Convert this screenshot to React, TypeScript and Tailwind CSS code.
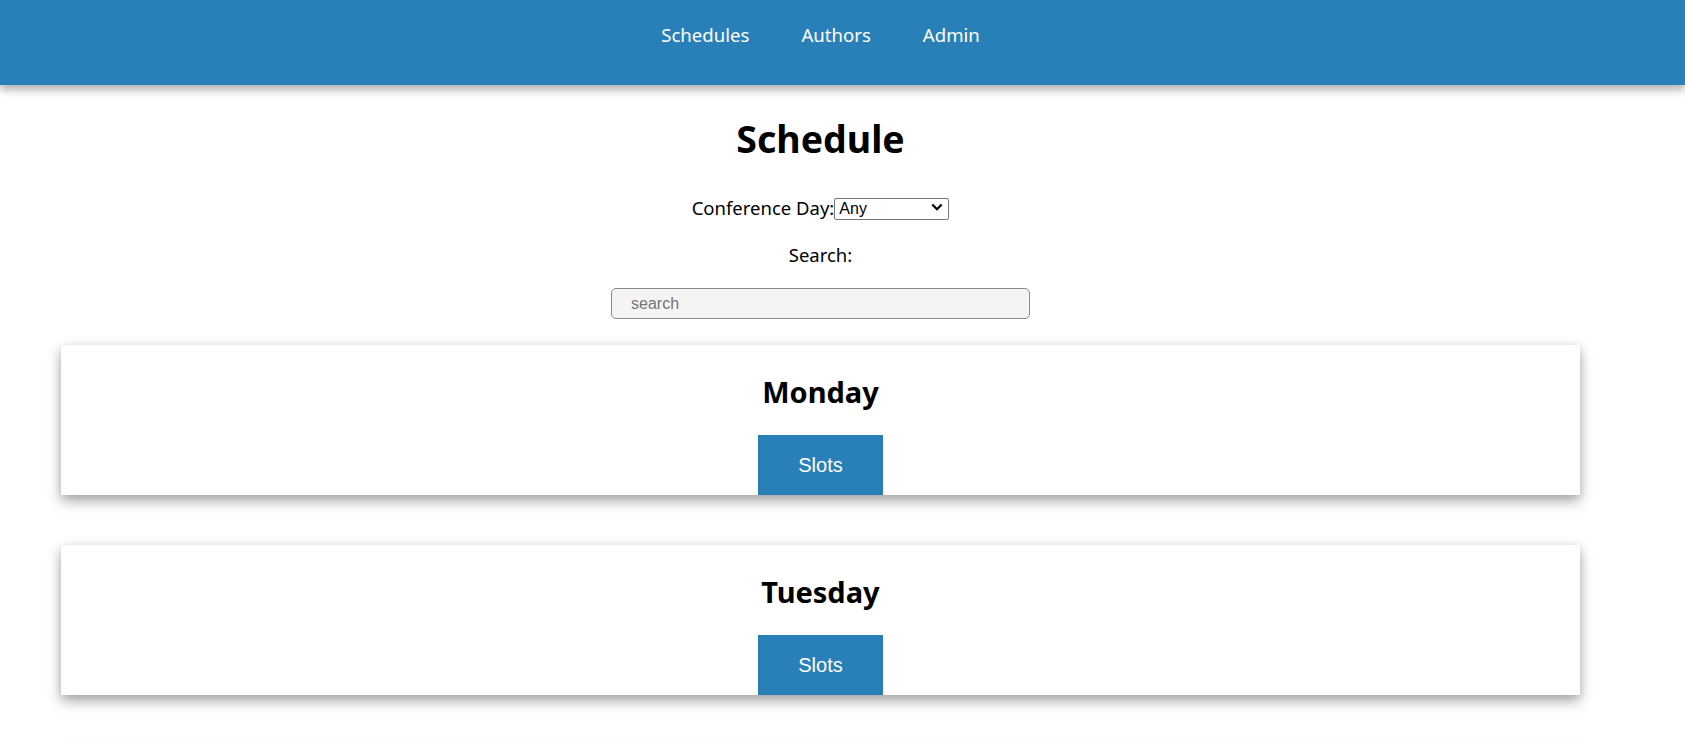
import { useState } from "react";

const days = ["Monday", "Tuesday", "Wednesday"];

export default function App() {
  const [day, setDay] = useState("Any");
  const [query, setQuery] = useState("");

  return (
    <div className="min-h-screen bg-white font-['Noto_Sans',sans-serif] text-black">
      {/* Top bar */}
      <header className="h-[85px] w-full bg-[#2980b9] shadow-[0_5px_8px_rgba(0,0,0,0.3)]">
        <nav className="w-[1641px] flex justify-center gap-[52px] pt-[20px]">
          {["Schedules", "Authors", "Admin"].map((item) => (
            <a key={item} href="#" className="text-[18.6px] leading-[30px] text-white no-underline">
              {item}
            </a>
          ))}
        </nav>
      </header>

      <main className="w-[1641px] flex flex-col items-center">
        <h1 className="mt-[30px] text-[37.5px] leading-[48px] font-bold">Schedule</h1>

        <div className="mt-[34px] flex items-center h-[22px]">
          <span className="text-[18.5px] leading-[22px]">Conference Day:</span>
          <div className="relative">
            <select
              value={day}
              onChange={(e) => setDay(e.target.value)}
              className="appearance-none w-[115px] h-[22px] border border-[#767676] rounded-[2px] bg-white pl-[4px] font-['Liberation_Sans',Arial,sans-serif] text-[16px] leading-[20px] outline-none"
            >
              <option>Any</option>
              <option>Monday</option>
              <option>Tuesday</option>
            </select>
            {/* chevron */}
            <svg
              className="pointer-events-none absolute right-[6px] top-[7px]"
              width="12"
              height="8"
              viewBox="0 0 12 8"
              fill="none"
            >
              <path d="M1.3 1.5 6 6.2 10.7 1.5" stroke="#000" strokeWidth="2.2" />
            </svg>
          </div>
        </div>

        <label className="mt-[25px] text-[18.5px] leading-[22px]">Search:</label>

        <input
          value={query}
          onChange={(e) => setQuery(e.target.value)}
          placeholder="search"
          className="mt-[22px] w-[419px] h-[31px] rounded-[5px] border border-[#8a8a8a] bg-[#f4f4f4] px-[19px] font-['Liberation_Sans',Arial,sans-serif] text-[16px] text-black placeholder:text-[#757575] outline-none"
        />

        <div className="mt-[26px] flex flex-col gap-[50px] w-[1519px]">
          {days.map((d) => (
            <section
              key={d}
              className="h-[150px] bg-white flex flex-col items-center pt-[30px] shadow-[0_6px_12px_rgba(0,0,0,0.35),0_0_8px_rgba(0,0,0,0.06)]"
            >
              <h2 className="text-[29px] leading-[34px] font-bold">{d}</h2>
              <button className="mt-[26px] w-[125px] h-[60px] bg-[#2980b9] text-white font-['Liberation_Sans',Arial,sans-serif] text-[20px]">
                Slots
              </button>
            </section>
          ))}
        </div>
      </main>
    </div>
  );
}
